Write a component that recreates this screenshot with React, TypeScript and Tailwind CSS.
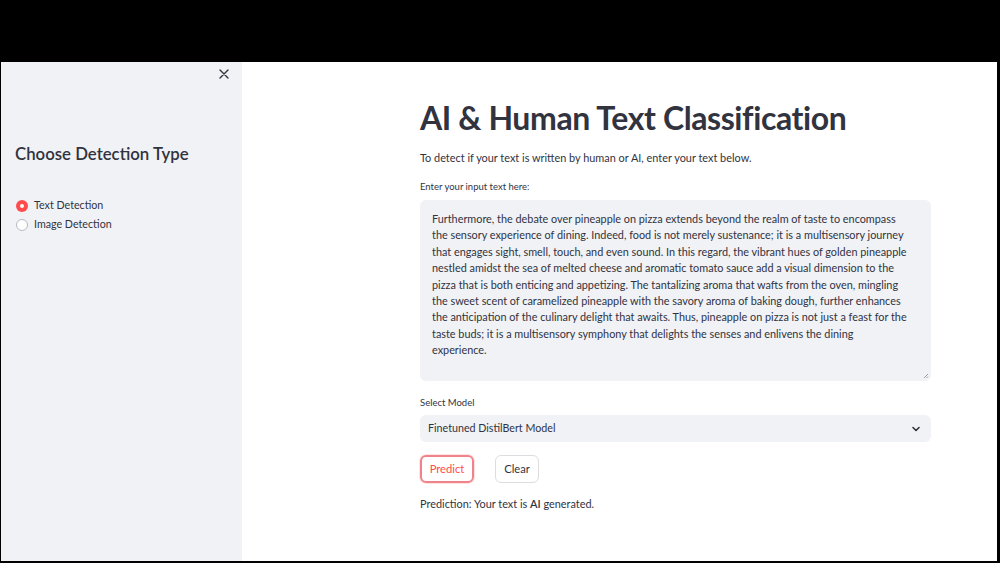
import React from 'react'

const lines = [
  'Furthermore, the debate over pineapple on pizza extends beyond the realm of taste to encompass',
  'the sensory experience of dining. Indeed, food is not merely sustenance; it is a multisensory journey',
  'that engages sight, smell, touch, and even sound. In this regard, the vibrant hues of golden pineapple',
  'nestled amidst the sea of melted cheese and aromatic tomato sauce add a visual dimension to the',
  'pizza that is both enticing and appetizing. The tantalizing aroma that wafts from the oven, mingling',
  'the sweet scent of caramelized pineapple with the savory aroma of baking dough, further enhances',
  'the anticipation of the culinary delight that awaits. Thus, pineapple on pizza is not just a feast for the',
  'taste buds; it is a multisensory symphony that delights the senses and enlivens the dining',
  'experience.',
]

function Radio({ label, checked }: { label: string; checked?: boolean }) {
  return (
    <div className="flex items-center gap-[6px] h-[19px]">
      {checked ? (
        <span className="w-[12px] h-[12px] rounded-full bg-[#ff4b4b] flex items-center justify-center">
          <span className="w-[4px] h-[4px] rounded-full bg-white" />
        </span>
      ) : (
        <span className="w-[12px] h-[12px] rounded-full bg-white border border-[#b8bac2]" />
      )}
      <span className="text-[10.7px] text-[#31333f]">{label}</span>
    </div>
  )
}

export default function App() {
  return (
    <div className="w-[1000px] h-[563px] bg-black flex flex-col overflow-hidden" style={{ fontFamily: 'Lato, "Noto Sans", sans-serif' }}>
      <div className="h-[62px] shrink-0" />
      <div className="flex flex-1 ml-px mr-[3px] mb-[2px] bg-white">
        {/* sidebar */}
        <aside className="relative w-[241px] bg-[#f0f2f6] px-[14px]">
          <button className="absolute right-[12px] top-[6px] text-[#31333f]">
            <svg width="12" height="12" viewBox="0 0 12 12" fill="none">
              <path d="M2 2l8 8M10 2l-8 8" stroke="currentColor" strokeWidth="1.4" strokeLinecap="round" />
            </svg>
          </button>
          <h2 className="mt-[80px] text-[16.8px] leading-[24px] font-semibold text-[#31333f]">Choose Detection Type</h2>
          <div className="mt-[30px] flex flex-col pl-[1px]">
            <Radio label="Text Detection" checked />
            <Radio label="Image Detection" />
          </div>
        </aside>

        {/* main */}
        <main className="flex-1 pl-[178px] pt-[36px]">
          <div className="w-[511px] text-[#31333f]">
            <h1 className="text-[32px] font-bold leading-[40px] tracking-[-0.4px]">AI &amp; Human Text Classification</h1>
            <p className="mt-[12px] text-[10.9px] leading-[16px]">To detect if your text is written by human or AI, enter your text below.</p>
            <label className="block mt-[14px] text-[9.5px] leading-[14px]">Enter your input text here:</label>
            <div className="relative mt-[6px] h-[181px] rounded-[6px] bg-[#f0f2f6] pl-[12px] pt-[11px] text-[10.85px] leading-[16.4px] text-[#31333f]">
              {lines.map((l, i) => (
                <div key={i} className="whitespace-nowrap">{l}</div>
              ))}
              <svg className="absolute right-[2px] bottom-[2px]" width="6" height="6" viewBox="0 0 6 6">
                <path d="M5 1L1 5M5 3.5L3.5 5" stroke="#888" strokeWidth="0.8" />
              </svg>
            </div>
            <div className="mt-[15px] text-[9.5px] leading-[14px]">Select Model</div>
            <div className="mt-[5px] h-[27px] rounded-[6px] bg-[#f0f2f6] flex items-center justify-between pl-[8px] pr-[10px]">
              <span className="text-[10.7px]">Finetuned DistilBert Model</span>
              <svg width="10" height="10" viewBox="0 0 10 10" fill="none">
                <path d="M2 3.5l3 3 3-3" stroke="#31333f" strokeWidth="1.6" strokeLinecap="round" strokeLinejoin="round" />
              </svg>
            </div>
            <div className="mt-[13px] flex gap-[21px]">
              <button className="h-[28px] w-[54px] rounded-[6px] border-2 border-[#f0828a] text-[#ff4b4b] text-[11.2px] shadow-[0_0_0_1px_rgba(255,75,75,0.15)]">Predict</button>
              <button className="h-[28px] w-[44px] rounded-[6px] border border-[#dcdde1] bg-white text-[#31333f] text-[11.2px]">Clear</button>
            </div>
            <p className="mt-[13px] text-[10.9px] leading-[16px]">Prediction: Your text is <b className="font-semibold">AI</b> generated.</p>
          </div>
        </main>
      </div>
    </div>
  )
}
